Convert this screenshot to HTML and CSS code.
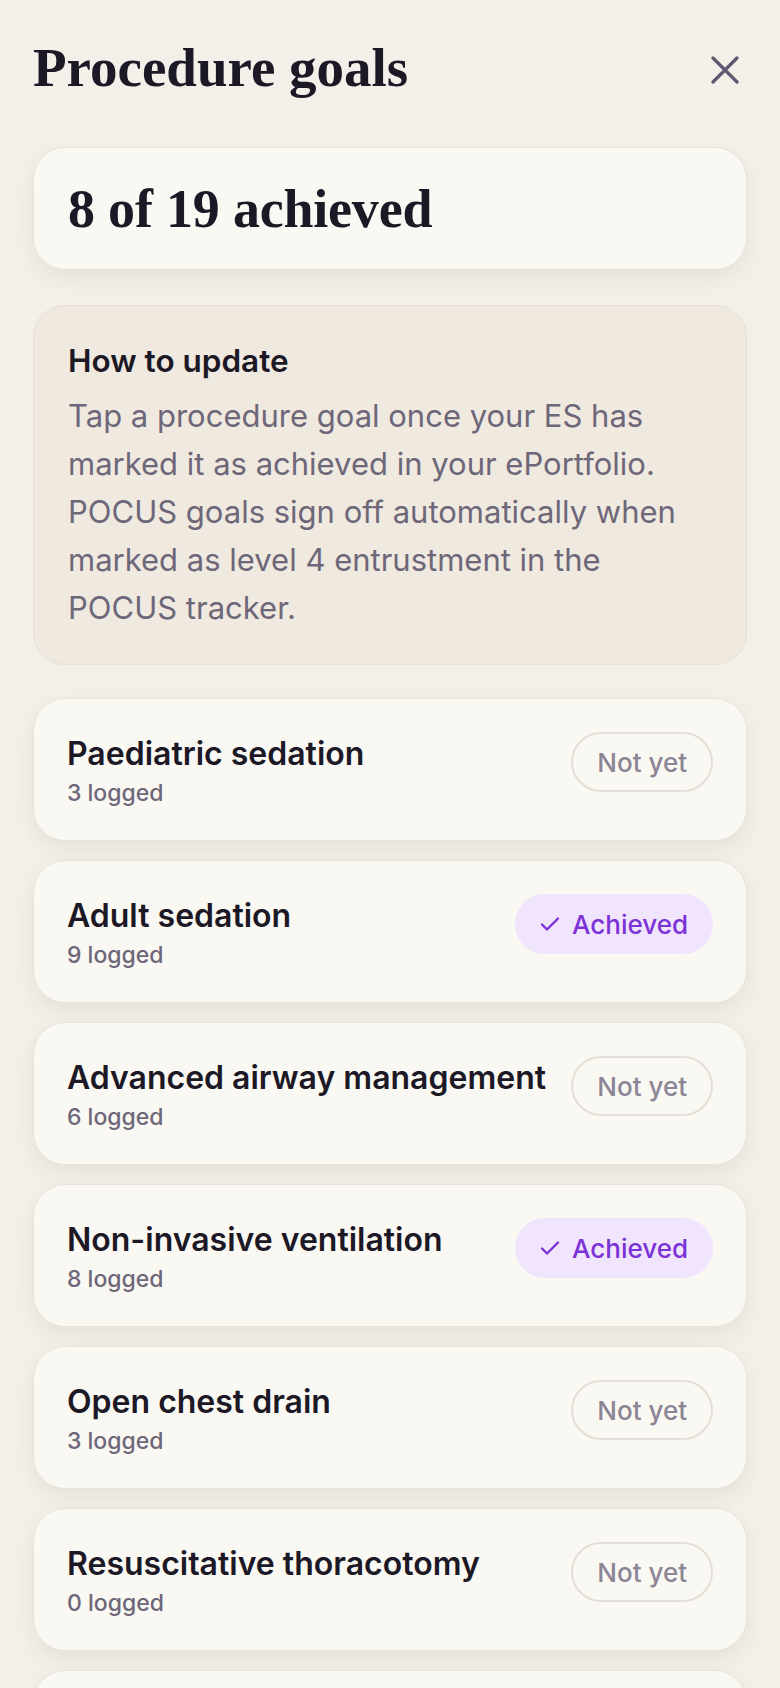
FILE: index.html
```html
<!DOCTYPE html>
<html lang="en">
<head>
  <meta charset="UTF-8" />
  <meta name="viewport" content="width=device-width, initial-scale=1.0"/>
  <title>Procedure goals</title>
  <link rel="stylesheet" href="styles.css">
</head>
<body>
  <div class="sheet">
    <div class="sheet-header">
      <h1>Procedure goals</h1>
      <button class="close-btn" aria-label="Close">
        <svg width="28" height="28" viewBox="0 0 28 28" fill="none">
          <path d="M2 2L26 26M26 2L2 26" stroke="currentColor" stroke-width="3.2" stroke-linecap="round"/>
        </svg>
      </button>
    </div>

    <div class="summary-card">
      <h2>8 of 19 achieved</h2>
    </div>

    <div class="info-box">
      <h3>How to update</h3>
      <p>Tap a procedure goal once your ES has marked it as achieved in your ePortfolio. POCUS goals sign off automatically when marked as level 4 entrustment in the POCUS tracker.</p>
    </div>

    <ul class="goal-list">
      <li class="goal-card">
        <div class="goal-text">
          <div class="goal-name">Paediatric sedation</div>
          <div class="goal-count">3 logged</div>
        </div>
        <span class="pill">Not yet</span>
      </li>
      <li class="goal-card">
        <div class="goal-text">
          <div class="goal-name">Adult sedation</div>
          <div class="goal-count">9 logged</div>
        </div>
        <span class="pill done">
          <svg width="20" height="16" viewBox="0 0 20 16" fill="none">
            <path d="M2 8.5L7 13.5L18 2.5" stroke="currentColor" stroke-width="2.4" stroke-linecap="round" stroke-linejoin="round"/>
          </svg>
          Achieved
        </span>
      </li>
      <li class="goal-card">
        <div class="goal-text">
          <div class="goal-name">Advanced airway management</div>
          <div class="goal-count">6 logged</div>
        </div>
        <span class="pill">Not yet</span>
      </li>
      <li class="goal-card">
        <div class="goal-text">
          <div class="goal-name">Non-invasive ventilation</div>
          <div class="goal-count">8 logged</div>
        </div>
        <span class="pill done">
          <svg width="20" height="16" viewBox="0 0 20 16" fill="none">
            <path d="M2 8.5L7 13.5L18 2.5" stroke="currentColor" stroke-width="2.4" stroke-linecap="round" stroke-linejoin="round"/>
          </svg>
          Achieved
        </span>
      </li>
      <li class="goal-card">
        <div class="goal-text">
          <div class="goal-name">Open chest drain</div>
          <div class="goal-count">3 logged</div>
        </div>
        <span class="pill">Not yet</span>
      </li>
      <li class="goal-card">
        <div class="goal-text">
          <div class="goal-name">Resuscitative thoracotomy</div>
          <div class="goal-count">0 logged</div>
        </div>
        <span class="pill">Not yet</span>
      </li>
      <li class="goal-card">
        <div class="goal-text">
          <div class="goal-name">Lateral canthotomy</div>
          <div class="goal-count">0 logged</div>
        </div>
        <span class="pill">Not yet</span>
      </li>
    </ul>
  </div>
</body>
</html>
```

FILE: styles.css
```css
body {
  margin: 0;
  padding: 0;
  background: #f3f0e9;
  font-family: Inter, "Noto Sans", sans-serif;
  color: #1c1826;
}

.sheet {
  padding: 35px 33px 0;
}

.sheet-header {
  display: flex;
  justify-content: space-between;
  align-items: center;
  margin-bottom: 47px;
}

.sheet-header h1 {
  margin: 0;
  font-family: "Liberation Serif", serif;
  font-size: 55px;
  font-weight: 700;
  line-height: 65px;
}

.close-btn {
  background: none;
  border: none;
  padding: 0;
  margin: 5px 8px 0 0;
  color: #5f5870;
  display: flex;
  cursor: pointer;
}

.summary-card {
  background: #faf8f3;
  border: 1.5px solid #e9e4da;
  border-radius: 32px;
  padding: 34px 34px 33px;
  box-shadow: 0 8px 20px rgba(60, 50, 30, 0.07);
  margin-bottom: 35px;
}

.summary-card h2 {
  margin: 0;
  font-family: "Liberation Serif", serif;
  font-size: 54px;
  font-weight: 700;
  line-height: 54px;
  letter-spacing: -0.2px;
}

.info-box {
  background: #efe9df;
  border: 1.5px solid #e6e0d5;
  border-radius: 32px;
  padding: 35px 56px 32px 34px;
  margin-bottom: 33px;
}

.info-box h3 {
  margin: 0 0 11px;
  font-size: 31.5px;
  font-weight: 600;
  line-height: 40px;
}

.info-box p {
  margin: 0;
  font-size: 31px;
  line-height: 48px;
  color: #6e6779;
}

.goal-list {
  list-style: none;
  margin: 0;
  padding: 0;
  display: flex;
  flex-direction: column;
  gap: 19px;
}

.goal-card {
  display: flex;
  justify-content: space-between;
  align-items: flex-start;
  background: #faf8f3;
  border: 1.5px solid #e9e4da;
  border-radius: 32px;
  padding: 35px 33px 31px;
  box-shadow: 0 8px 20px rgba(60, 50, 30, 0.07);
}

.goal-name {
  font-size: 32px;
  font-weight: 600;
  line-height: 40px;
}

.goal-count {
  margin-top: 3px;
  font-size: 23px;
  font-weight: 500;
  line-height: 32px;
  color: #6e6779;
}

.pill {
  display: flex;
  align-items: center;
  gap: 12px;
  height: 60px;
  box-sizing: border-box;
  margin-top: -2px;
  padding: 0 24px;
  border: 2px solid #e4dfd6;
  border-radius: 30px;
  font-size: 26px;
  font-weight: 500;
  color: #8b8595;
  white-space: nowrap;
}

.pill.done {
  padding: 0 23px;
  background: #f0e5fc;
  border-color: #f0e5fc;
  color: #7c32d6;
}
```
